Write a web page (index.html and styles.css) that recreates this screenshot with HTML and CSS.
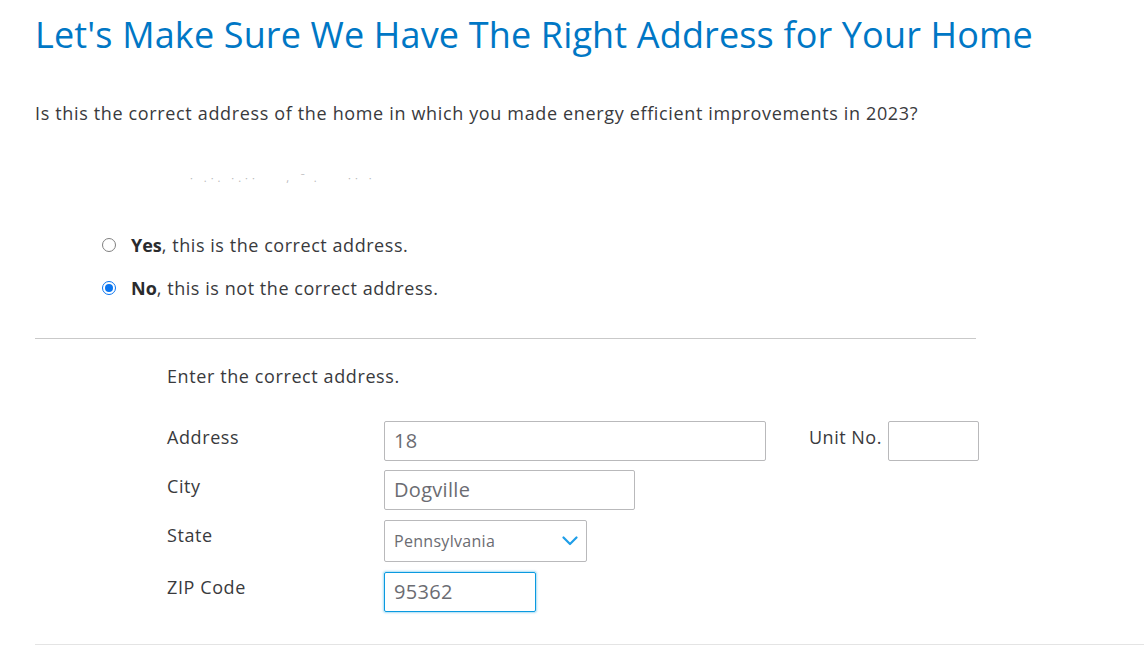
FILE: index.html
```html
<!DOCTYPE html>
<html lang="en">
<head>
<meta charset="utf-8">
<title>Address</title>
<link rel="stylesheet" href="styles.css">
</head>
<body>
<main class="page">
  <h1 class="title">Let's Make Sure We Have The Right Address for Your Home</h1>
  <p class="question">Is this the correct address of the home in which you made energy efficient improvements in 2023?</p>
  <p class="redacted">·&nbsp;.·. ·.··&nbsp;&nbsp;&nbsp;&nbsp;,&nbsp;&nbsp;̄&nbsp;.&nbsp;&nbsp;&nbsp;&nbsp;·· ·</p>
  <div class="choices">
    <label class="choice"><span class="radio"></span><span><b>Yes</b>, this is the correct address.</span></label>
    <label class="choice"><span class="radio radio-on"></span><span><b>No</b>, this is not the correct address.</span></label>
  </div>
  <hr class="rule">
  <section class="form">
    <p class="intro">Enter the correct address.</p>
    <div class="row row-first">
      <span class="label">Address</span>
      <span class="field field-address">18</span>
      <span class="unit-label">Unit No.</span>
      <span class="field field-unit"></span>
    </div>
    <div class="row">
      <span class="label">City</span>
      <span class="field field-city">Dogville</span>
    </div>
    <div class="row">
      <span class="label">State</span>
      <span class="field field-state"><span class="state-text">Pennsylvania</span>
        <svg class="chev" width="16" height="10" viewBox="0 0 16 10"><path d="M1.5 1.5 L8 8 L14.5 1.5" fill="none" stroke="#1f9ee8" stroke-width="2.2" stroke-linecap="round" stroke-linejoin="round"/></svg>
      </span>
    </div>
    <div class="row">
      <span class="label">ZIP Code</span>
      <span class="field field-zip">95362</span>
    </div>
  </section>
  <hr class="rule rule-bottom">
</main>
</body>
</html>
```
FILE: styles.css
```css
html, body {
  margin: 0;
  padding: 0;
  background: #ffffff;
}
body {
  font-family: "Open Sans", Lato, sans-serif;
  color: #393a3d;
  letter-spacing: 0.6px;
}
.page {
  padding-left: 35px;
}
.title {
  margin: 0;
  padding-top: 13px;
  font-size: 36px;
  line-height: 44px;
  font-weight: 400;
  color: #0077c5;
  letter-spacing: 0.15px;
}
.question {
  margin: 0;
  padding-top: 44px;
  font-size: 18px;
  line-height: 24px;
  letter-spacing: 0.65px;
}
.redacted {
  margin: 0;
  padding: 46px 0 0 155px;
  font-size: 11px;
  line-height: 14px;
  color: #b9b9bb;
  letter-spacing: 4px;
}
.choices {
  display: flex;
  flex-direction: column;
  gap: 19px;
  padding: 48px 0 0 67px;
}
.choice {
  display: flex;
  align-items: center;
  gap: 15px;
  font-size: 18px;
  line-height: 24px;
  letter-spacing: 0.55px;
}
.choice b {
  font-weight: 700;
  color: #2a2b2e;
  letter-spacing: 0;
}
.radio {
  width: 12px;
  height: 12px;
  border: 1px solid #808080;
  border-radius: 50%;
  box-sizing: content-box;
  display: inline-block;
  position: relative;
}
.radio-on {
  border: 1px solid #0a75f0;
}
.radio-on::after {
  content: "";
  position: absolute;
  left: 2px;
  top: 2px;
  width: 8px;
  height: 8px;
  border-radius: 50%;
  background: #0a75f0;
}
.rule {
  margin: 38px 0 0 0;
  width: 941px;
  border: none;
  border-top: 1px solid #c9c9c9;
}
.form {
  padding-left: 132px;
}
.intro {
  margin: 0;
  padding-top: 25px;
  font-size: 18px;
  line-height: 24px;
}
.row {
  display: flex;
  align-items: flex-start;
  margin-top: 9px;
}
.row-first {
  margin-top: 33px;
}
.label {
  width: 217px;
  font-size: 18px;
  line-height: 24px;
  padding-top: 4px;
}
.field {
  box-sizing: border-box;
  height: 40px;
  border: 1px solid #b9b9bb;
  border-radius: 2px;
  font-size: 20px;
  line-height: 38px;
  padding-left: 9px;
  color: #6b6c72;
  letter-spacing: 0.3px;
  display: flex;
  align-items: center;
}
.field-address { width: 382px; }
.unit-label {
  font-size: 18px;
  line-height: 24px;
  padding: 4px 0 0 43px;
  width: 79px;
  letter-spacing: 0.5px;
}
.field-unit { width: 91px; }
.field-city { width: 251px; }
.field-state {
  width: 203px;
  height: 42px;
  font-size: 16px;
  justify-content: space-between;
  padding-right: 8px;
  margin-top: 1px;
}
.chev { display: block; }
.field-zip {
  width: 152px;
  margin-top: 1px;
  border-color: #0a9ae0;
  box-shadow: 0 0 2px 1px rgba(10, 154, 224, 0.35);
}
.rule-bottom {
  margin-top: 32px;
  width: auto;
  border-top-color: #e4e4e4;
}
```
